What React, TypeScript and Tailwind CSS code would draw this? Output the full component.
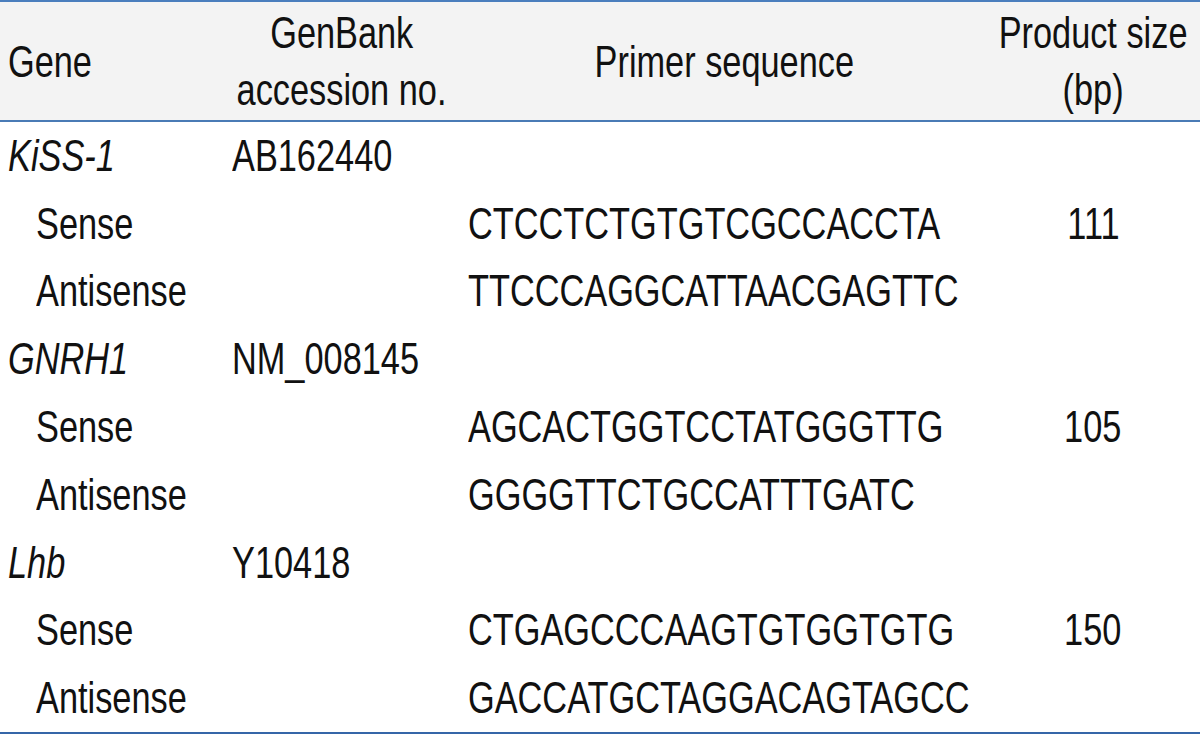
const font = {
  fontFamily: "'Liberation Sans', Arial, sans-serif",
};

type Row = {
  label: string;
  italic?: boolean;
  indent?: boolean;
  accession?: string;
  primer?: string;
  size?: string;
};

const rows: Row[] = [
  { label: "KiSS-1", italic: true, accession: "AB162440" },
  { label: "Sense", indent: true, primer: "CTCCTCTGTGTCGCCACCTA", size: "111" },
  { label: "Antisense", indent: true, primer: "TTCCCAGGCATTAACGAGTTC" },
  { label: "GNRH1", italic: true, accession: "NM_008145" },
  { label: "Sense", indent: true, primer: "AGCACTGGTCCTATGGGTTG", size: "105" },
  { label: "Antisense", indent: true, primer: "GGGGTTCTGCCATTTGATC" },
  { label: "Lhb", italic: true, accession: "Y10418" },
  { label: "Sense", indent: true, primer: "CTGAGCCCAAGTGTGGTGTG", size: "150" },
  { label: "Antisense", indent: true, primer: "GACCATGCTAGGACAGTAGCC" },
];

// condensed look: Liberation Sans squeezed horizontally
function Left({ children, italic }: { children?: React.ReactNode; italic?: boolean }) {
  return (
    <span className={`inline-block whitespace-nowrap origin-left scale-x-[0.78] ${italic ? "italic" : ""}`}>
      {children}
    </span>
  );
}

function Mid({ children }: { children?: React.ReactNode }) {
  return <span className="inline-block whitespace-nowrap origin-center scale-x-[0.78]">{children}</span>;
}

export default function App() {
  return (
    <div
      className="w-[1200px] h-[734px] overflow-hidden bg-white text-[#111] text-[44px] flex flex-col border-t-2 border-b-2 border-t-[#4a7ebd] border-b-[#3566a8]"
      style={font}
    >
      {/* Header */}
      <div className="h-[120px] shrink-0 bg-[#f3f3f3] border-b-2 border-[#4a7bb5] grid grid-cols-[222px_240px_524px_minmax(0,1fr)] items-center leading-[57px]">
        <div className="pl-2 min-w-0">
          <Left>Gene</Left>
        </div>
        <div className="flex flex-col items-center min-w-0">
          <Mid>GenBank</Mid>
          <Mid>accession no.</Mid>
        </div>
        <div className="flex flex-col items-center min-w-0">
          <Mid>Primer sequence</Mid>
        </div>
        <div className="flex flex-col items-center min-w-0">
          <Mid>Product size</Mid>
          <Mid>(bp)</Mid>
        </div>
      </div>

      {/* Body */}
      <div className="flex-1 grid grid-rows-9">
        {rows.map((r, i) => (
          <div key={i} className="grid grid-cols-[222px_240px_524px_minmax(0,1fr)] items-center">
            <div className={`min-w-0 ${r.indent ? "pl-9" : "pl-2"}`}>
              <Left italic={r.italic}>{r.label}</Left>
            </div>
            <div className="pl-2.5 min-w-0">
              <Left>{r.accession}</Left>
            </div>
            <div className="pl-1.5 min-w-0">
              <Left>{r.primer}</Left>
            </div>
            <div className="flex flex-col items-center min-w-0">
              <Mid>{r.size}</Mid>
            </div>
          </div>
        ))}
      </div>
    </div>
  );
}
